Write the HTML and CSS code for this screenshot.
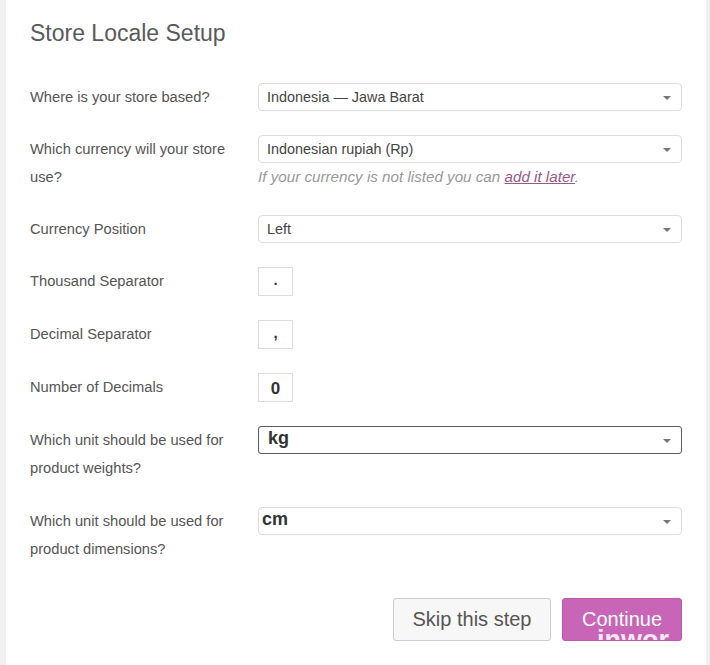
FILE: index.html
```html
<!DOCTYPE html>
<html>
<head>
<meta charset="utf-8">
<link rel="stylesheet" href="styles.css">
</head>
<body>
<div class="card">
  <h1 class="title">Store Locale Setup</h1>
  <div class="form">
    <div class="row">
      <div class="label">Where is your store based?</div>
      <div class="ctrl">
        <div class="select"><span>Indonesia — Jawa Barat</span><i class="arrow"></i></div>
      </div>
    </div>
    <div class="row">
      <div class="label">Which currency will your store use?</div>
      <div class="ctrl">
        <div class="select"><span>Indonesian rupiah (Rp)</span><i class="arrow"></i></div>
        <p class="help">If your currency is not listed you can <a href="#">add it later</a>.</p>
      </div>
    </div>
    <div class="row">
      <div class="label">Currency Position</div>
      <div class="ctrl">
        <div class="select"><span>Left</span><i class="arrow"></i></div>
      </div>
    </div>
    <div class="row">
      <div class="label">Thousand Separator</div>
      <div class="ctrl"><div class="small">.</div></div>
    </div>
    <div class="row">
      <div class="label">Decimal Separator</div>
      <div class="ctrl"><div class="small">,</div></div>
    </div>
    <div class="row">
      <div class="label">Number of Decimals</div>
      <div class="ctrl"><div class="small num">0</div></div>
    </div>
    <div class="row tall">
      <div class="label">Which unit should be used for product weights?</div>
      <div class="ctrl">
        <div class="select unit focus"><span>kg</span><i class="arrow"></i></div>
      </div>
    </div>
    <div class="row">
      <div class="label">Which unit should be used for product dimensions?</div>
      <div class="ctrl">
        <div class="select unit cm"><span>cm</span><i class="arrow"></i></div>
      </div>
    </div>
  </div>
  <div class="actions">
    <button class="btn skip">Skip this step</button>
    <button class="btn primary">Continue<span class="mark">inwor</span></button>
  </div>
</div>
</body>
</html>
```
FILE: styles.css
```css
html, body {
  margin: 0;
  padding: 0;
}
body {
  background: #f1f1f1;
  font-family: "Liberation Sans", Arial, sans-serif;
  color: #555;
}
.card {
  background: #fff;
  margin: 0 4px 0 6px;
  padding: 19px 24px 0 24px;
  min-height: 665px;
  box-sizing: border-box;
}
.title {
  margin: 0 0 23px 0;
  font-size: 23px;
  font-weight: 400;
  line-height: 29px;
  color: #5a5a5a;
}
.row {
  display: grid;
  grid-template-columns: 228px 424px;
  padding: 12px 0;
  align-items: start;
}
.row.tall {
  padding-bottom: 13px;
}
.label {
  font-size: 14.7px;
  line-height: 28px;
  color: #555;
  padding-right: 16px;
}
.select {
  position: relative;
  height: 28px;
  box-sizing: border-box;
  border: 1px solid #ddd;
  border-radius: 4px;
  padding-left: 8px;
  font-size: 14.4px;
  line-height: 26px;
  color: #444;
  background: #fff;
}
.arrow {
  position: absolute;
  right: 10px;
  top: 12px;
  width: 0;
  height: 0;
  border-left: 4px solid transparent;
  border-right: 4px solid transparent;
  border-top: 4px solid #777;
}
.help {
  margin: 0;
  font-size: 15.2px;
  line-height: 28px;
  font-style: italic;
  color: #999;
}
.help a {
  color: #96588a;
  text-decoration: underline;
}
.small {
  width: 35px;
  height: 29px;
  box-sizing: border-box;
  border: 1px solid #ddd;
  text-align: center;
  font-size: 15px;
  font-weight: 700;
  line-height: 24px;
  color: #333;
}
.small.num {
  font-size: 17px;
  line-height: 30px;
}
.unit {
  font-size: 18px;
  font-weight: 700;
  color: #333;
  line-height: 22px;
}
.unit.focus {
  border-color: #5b5b5b;
  border-radius: 3px;
  padding-left: 9px;
}
.unit.cm {
  padding-left: 3px;
}
.actions {
  display: flex;
  justify-content: flex-end;
  gap: 11px;
  margin-top: 23px;
  width: 652px;
}
.btn {
  height: 43px;
  box-sizing: border-box;
  font-family: "Liberation Sans", Arial, sans-serif;
  font-size: 20px;
  line-height: 38px;
  border-radius: 3px;
  padding: 0 0 2px 0;
  cursor: pointer;
}
.skip {
  width: 158px;
  background: #f7f7f7;
  border: 1px solid #ccc;
  color: #555;
}
.primary {
  position: relative;
  overflow: hidden;
  width: 120px;
  background: #c865b6;
  border: 1px solid #bd58aa;
  color: #fff;
}
.mark {
  position: absolute;
  left: 34px;
  top: 26px;
  font-size: 27px;
  font-weight: 700;
  color: rgba(255, 255, 255, 0.85);
  line-height: 30px;
}
```
